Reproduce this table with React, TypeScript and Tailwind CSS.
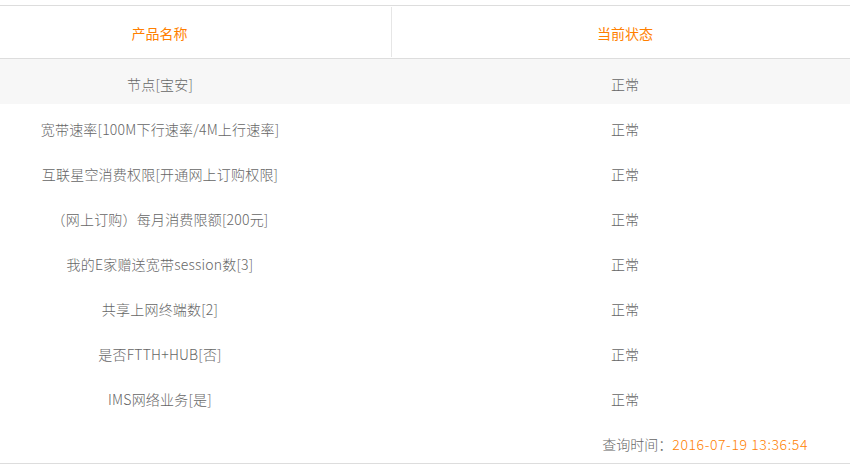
import React from "react";

const rows: string[] = [
  "节点[宝安]",
  "宽带速率[100M下行速率/4M上行速率]",
  "互联星空消费权限[开通网上订购权限]",
  "（网上订购）每月消费限额[200元]",
  "我的E家赠送宽带session数[3]",
  "共享上网终端数[2]",
  "是否FTTH+HUB[否]",
  "IMS网络业务[是]",
];

export default function App() {
  return (
    <div
      className="w-[850px] h-[467px] bg-white text-[14px] text-[#666]"
      style={{ fontFamily: '"Noto Sans CJK SC", "Noto Sans", sans-serif', fontWeight: 300 }}
    >
      <div className="pt-[5px]">
        <div className="border-t border-[#dddddd]">
          <div className="grid grid-cols-[392px_1fr] h-[53px] border-b border-[#dddddd] text-[#ff7f00] font-normal">
            <div className="flex items-center justify-center pr-[72px] pt-[3px] border-r border-[#e6e6e6] my-[1px]">
              产品名称
            </div>
            <div className="flex items-center justify-center pl-[8px] pt-[3px]">当前状态</div>
          </div>
          {rows.map((r, i) => (
            <div
              key={i}
              className={`grid grid-cols-[392px_1fr] h-[45px] ${i === 0 ? "bg-[#f7f7f7]" : "bg-white"}`}
            >
              <div className="flex items-center justify-center pr-[72px] pt-[6px] whitespace-nowrap tracking-[0.2px]">{r}</div>
              <div className="flex items-center justify-center pl-[8px] pt-[6px]">正常</div>
            </div>
          ))}
          <div className="h-[45px] border-b border-[#dddddd] flex justify-end pr-[42px] pt-[15px] leading-[20px]">
            <span>查询时间：</span>
            <span className="text-[#ff7f00] tracking-[0.6px]">2016-07-19 13:36:54</span>
          </div>
        </div>
      </div>
    </div>
  );
}
